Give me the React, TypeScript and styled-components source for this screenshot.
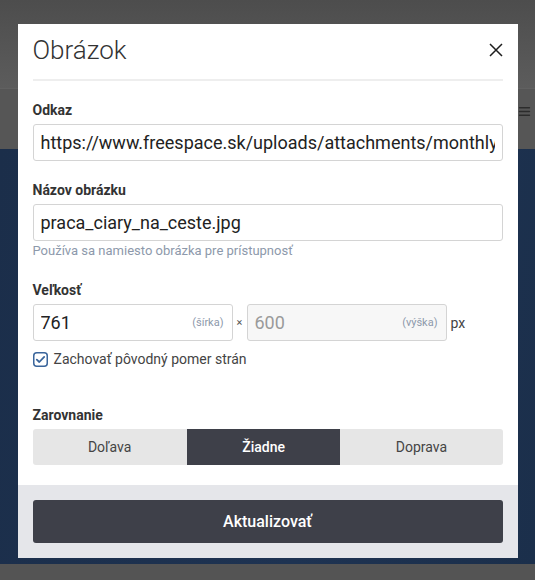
import React, { useState } from "react";
import styled, { createGlobalStyle } from "styled-components";
import { AlignJustify } from "lucide-react";

const GlobalStyle = createGlobalStyle`
  body {
    margin: 0;
    font-family: Roboto, "Liberation Sans", Arial, sans-serif;
  }
  * {
    box-sizing: border-box;
  }
`;

const Page = styled.div`
  min-height: 580px;
  display: flex;
  flex-direction: column;
  background: #545454;
`;

const TopBar = styled.div`
  height: 89px;
  background: linear-gradient(#4d4d4d, #5c5c5c);
  border-bottom: 1px solid #616161;
`;

const Toolbar = styled.div`
  height: 60px;
  display: flex;
  justify-content: flex-end;
  align-items: flex-start;
  padding: 16px 4px 0 0;
  background: #565656;
  color: #2c2c2c;
`;

const Hero = styled.div`
  height: 415px;
  background: linear-gradient(100deg, #1b2e4a, #1e3352 60%, #1b2f4b);
`;

const Backdrop = styled.div`
  position: fixed;
  inset: 0;
  display: flex;
  justify-content: center;
  align-items: flex-start;
  padding-top: 24px;
`;

const Modal = styled.div`
  width: 500px;
  background: #ffffff;
  display: flex;
  flex-direction: column;
`;

const Header = styled.div`
  margin: 0 15px;
  padding: 8px 0 11px;
  border-bottom: 2px solid #eeeeee;
  display: flex;
  align-items: center;
  justify-content: space-between;
`;

const Title = styled.h2`
  margin: 0;
  font-size: 26px;
  font-weight: 300;
  line-height: 36px;
  color: #333333;
`;

const CloseBtn = styled.button`
  width: 14px;
  height: 14px;
  padding: 0;
  border: 0;
  background: none;
  display: flex;
  cursor: pointer;
`;

const Body = styled.div`
  padding: 19px 15px 20px;
  display: flex;
  flex-direction: column;
`;

const Field = styled.div<{ $gap?: number }>`
  margin-bottom: ${(props) => props.$gap ?? 19}px;
`;

const Label = styled.label`
  display: block;
  font-size: 14px;
  font-weight: 700;
  line-height: 20px;
  color: #333333;
  margin-bottom: 4px;
`;

const TextInput = styled.input`
  width: 100%;
  height: 37px;
  border: 1px solid #d4d4d4;
  border-radius: 3px;
  padding: 0 7px;
  font-family: Roboto, "Liberation Sans", sans-serif;
  font-size: 18px;
  color: #222222;
  outline: none;
`;

const Help = styled.div`
  margin-top: 2px;
  font-size: 13px;
  line-height: 16px;
  color: #8d99ab;
`;

const SizeRow = styled.div`
  display: flex;
  align-items: center;
`;

const SizeBox = styled.div<{ $disabled?: boolean }>`
  width: 200px;
  height: 37px;
  border: 1px solid #d4d4d4;
  border-radius: 3px;
  padding: 0 8px 0 7px;
  display: flex;
  align-items: center;
  background: ${(props) => (props.$disabled ? "#f7f7f7" : "#ffffff")};
`;

const SizeInput = styled.input`
  flex: 1;
  min-width: 0;
  padding: 0;
  border: 0;
  outline: none;
  background: transparent;
  font-family: Roboto, "Liberation Sans", sans-serif;
  font-size: 18px;
  color: #222222;
  &:disabled {
    color: #9a9a9a;
  }
`;

const Hint = styled.span`
  font-size: 11px;
  color: #8d99ab;
`;

const Times = styled.span`
  width: 14px;
  text-align: center;
  font-size: 11px;
  color: #555555;
`;

const Unit = styled.span`
  margin-left: 4px;
  font-size: 14px;
  color: #444444;
`;

const CheckRow = styled.label`
  display: flex;
  align-items: center;
  gap: 6px;
  margin-top: 10px;
  font-size: 14px;
  line-height: 16px;
  color: #444444;
  cursor: pointer;
`;

const Segmented = styled.div`
  display: flex;
  border-radius: 3px;
  overflow: hidden;
`;

const Segment = styled.button<{ $active?: boolean }>`
  flex: 1 1 auto;
  height: 36px;
  padding: 0 24px;
  border: 0;
  font-family: Roboto, "Liberation Sans", sans-serif;
  font-size: 14px;
  font-weight: ${(props) => (props.$active ? 500 : 400)};
  background: ${(props) => (props.$active ? "#3e4049" : "#e6e6e6")};
  color: ${(props) => (props.$active ? "#ffffff" : "#444444")};
  cursor: pointer;
`;

const Footer = styled.div`
  background: #e5e6ea;
  padding: 15px;
`;

const SubmitBtn = styled.button`
  width: 100%;
  height: 43px;
  border: 0;
  border-radius: 3px;
  background: #3e4049;
  color: #ffffff;
  font-family: Roboto, "Liberation Sans", sans-serif;
  font-size: 16px;
  font-weight: 500;
  cursor: pointer;
`;

const CheckIcon = ({ checked }: { checked: boolean }) => (
  <svg width="15" height="15" viewBox="0 0 15 15">
    <rect x="0.75" y="0.75" width="13.5" height="13.5" rx="3" fill="#fff" stroke="#3a659b" strokeWidth="1.5" />
    {checked && (
      <path d="M3.8 7.6 L6.3 10 L11.2 4.9" fill="none" stroke="#3a659b" strokeWidth="1.8" strokeLinecap="round" strokeLinejoin="round" />
    )}
  </svg>
);

const aligns = ["Doľava", "Žiadne", "Doprava"];

const App = () => {
  const [keepRatio, setKeepRatio] = useState(true);
  const [align, setAlign] = useState("Žiadne");

  return (
    <>
      <GlobalStyle />
      <Page>
        <TopBar />
        <Toolbar>
          <AlignJustify size={13} strokeWidth={3} />
        </Toolbar>
        <Hero />
      </Page>
      <Backdrop>
        <Modal>
          <Header>
            <Title>Obrázok</Title>
            <CloseBtn aria-label="Zavrieť">
              <svg width="14" height="14" viewBox="0 0 14 14">
                <path d="M1 1 L13 13 M13 1 L1 13" stroke="#1e1e1e" strokeWidth="1.5" />
              </svg>
            </CloseBtn>
          </Header>
          <Body>
            <Field>
              <Label>Odkaz</Label>
              <TextInput defaultValue="https://www.freespace.sk/uploads/attachments/monthly_2021_05/praca_ciary_na_ceste.jpg" />
            </Field>
            <Field $gap={21}>
              <Label>Názov obrázku</Label>
              <TextInput defaultValue="praca_ciary_na_ceste.jpg" />
              <Help>Používa sa namiesto obrázka pre prístupnosť</Help>
            </Field>
            <Field $gap={38}>
              <Label>Veľkosť</Label>
              <SizeRow>
                <SizeBox>
                  <SizeInput defaultValue="761" />
                  <Hint>(šírka)</Hint>
                </SizeBox>
                <Times>×</Times>
                <SizeBox $disabled>
                  <SizeInput defaultValue="600" disabled />
                  <Hint>(výška)</Hint>
                </SizeBox>
                <Unit>px</Unit>
              </SizeRow>
              <CheckRow onClick={() => setKeepRatio(!keepRatio)}>
                <CheckIcon checked={keepRatio} />
                Zachovať pôvodný pomer strán
              </CheckRow>
            </Field>
            <Field $gap={0}>
              <Label>Zarovnanie</Label>
              <Segmented>
                {aligns.map((item) => (
                  <Segment key={item} $active={align === item} onClick={() => setAlign(item)}>
                    {item}
                  </Segment>
                ))}
              </Segmented>
            </Field>
          </Body>
          <Footer>
            <SubmitBtn>Aktualizovať</SubmitBtn>
          </Footer>
        </Modal>
      </Backdrop>
    </>
  );
};

export default App;
